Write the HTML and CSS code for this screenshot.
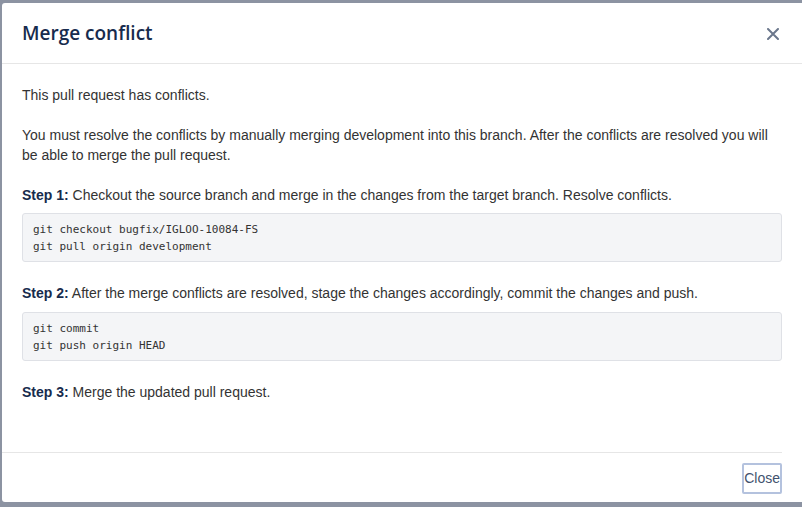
FILE: index.html
```html
<!DOCTYPE html>
<html lang="en">
<head>
<meta charset="utf-8">
<title>Merge conflict</title>
<link rel="stylesheet" href="styles.css">
</head>
<body>
<div class="backdrop">
  <div class="modal">
    <div class="modal-header">
      <h2 class="modal-title">Merge conflict</h2>
      <button class="icon-close" aria-label="Close">
        <svg width="12" height="12" viewBox="0 0 12 12"><path d="M1 1L11 11M11 1L1 11" stroke="#6b778c" stroke-width="2" stroke-linecap="round"/></svg>
      </button>
    </div>
    <div class="modal-body">
      <p>This pull request has conflicts.</p>
      <p>You must resolve the conflicts by manually merging development into this branch. After the conflicts are resolved you will be able to merge the pull request.</p>
      <p class="step"><strong>Step 1:</strong> Checkout the source branch and merge in the changes from the target branch. Resolve conflicts.</p>
      <pre class="code">git checkout bugfix/IGLOO-10084-FS
git pull origin development</pre>
      <p class="step step-2"><strong>Step 2:</strong> After the merge conflicts are resolved, stage the changes accordingly, commit the changes and push.</p>
      <pre class="code">git commit
git push origin HEAD</pre>
      <p class="step"><strong>Step 3:</strong> Merge the updated pull request.</p>
    </div>
    <div class="modal-footer">
      <button class="btn-close">Close</button>
    </div>
  </div>
</div>
</body>
</html>
```
FILE: styles.css
```css
html, body {
  margin: 0;
  padding: 0;
  height: 100%;
  overflow: hidden;
}
body {
  background: #8c93a2;
  font-family: "Liberation Sans", Arial, sans-serif;
  font-size: 14px;
  color: #333333;
}
.backdrop {
  padding: 3px 0 0 2px;
}
.modal {
  width: 810px;
  height: 499px;
  background: #ffffff;
  border-radius: 3px;
  display: flex;
  flex-direction: column;
}
.modal-header {
  height: 60px;
  border-bottom: 1px solid #e6e6e6;
  display: flex;
  align-items: center;
  justify-content: space-between;
  padding: 0 22px 0 20px;
  width: 760px;
  box-sizing: content-box;
}
.modal-title {
  margin: 0;
  font-family: "Open Sans", "Liberation Sans", sans-serif;
  font-size: 19px;
  font-weight: 600;
  color: #172b4d;
  line-height: 24px;
}
.icon-close {
  background: none;
  border: 0;
  padding: 0;
  width: 12px;
  height: 12px;
  margin-right: 3px;
  margin-top: 1px;
  display: flex;
}
.modal-body {
  padding: 21px 20px 0 20px;
  width: 760px;
  flex: 1;
}
.modal-body p {
  margin: 0 0 20px;
  line-height: 20px;
}
.modal-body p.step {
  margin-bottom: 8px;
}
.modal-body p.step-2 {
  margin-bottom: 9px;
}
.modal-body strong {
  color: #172b4d;
  font-weight: 700;
}
.code {
  margin: 0 0 21px;
  background: #f4f5f7;
  border: 1px solid #dfe1e6;
  border-radius: 3px;
  padding: 7px 10px 6px;
  font-family: "DejaVu Sans Mono", "Liberation Mono", monospace;
  font-size: 11px;
  line-height: 17px;
  color: #333333;
}
.modal-footer {
  height: 50px;
  border-top: 1px solid #e6e6e6;
  width: 780px;
  display: flex;
  justify-content: flex-end;
  align-items: center;
  box-sizing: border-box;
}
.btn-close {
  background: #ffffff;
  border: 2px solid #b4c2de;
  border-radius: 2px;
  height: 31px;
  padding: 0;
  font-family: "Liberation Sans", Arial, sans-serif;
  font-size: 14px;
  color: #42526e;
  margin-top: 1px;
}
```
